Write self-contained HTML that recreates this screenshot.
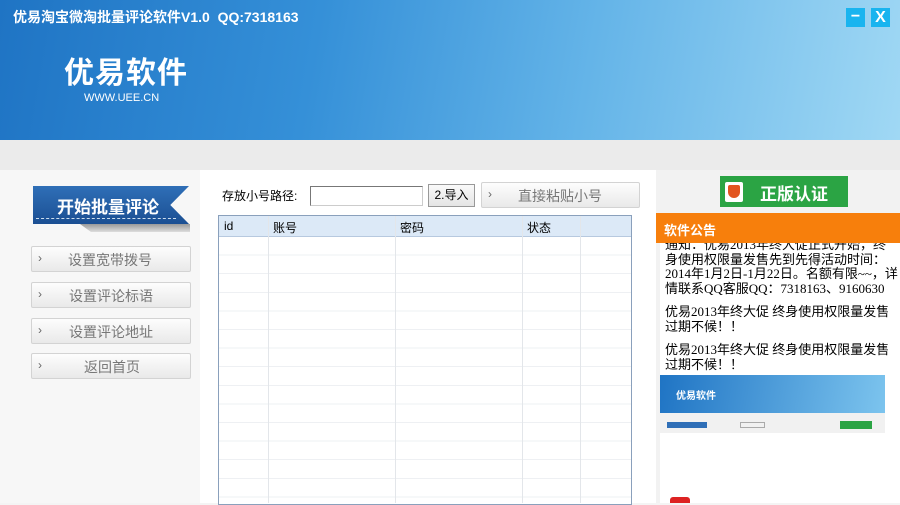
<!DOCTYPE html><html><head><meta charset="utf-8"><style>
*{margin:0;padding:0;box-sizing:border-box}
body{width:900px;height:503px;overflow:hidden;background:#f4f4f4;font-family:"Liberation Sans","Noto Sans CJK SC",sans-serif;position:relative}
.a{position:absolute}
.hdr{left:0;top:0;width:900px;height:140px;background:linear-gradient(100deg,#1f74c4 0%,#3590d8 35%,#64b4e8 65%,#a0d8f4 100%)}
.btn{background:linear-gradient(#fdfdfd,#e9e9e9);border:1px solid #d3d3d3;border-radius:2px;color:#777;font-size:14px}
.btn .ch{position:absolute;left:6px;top:4px;font-size:12px;color:#666}
.t{position:absolute;font-size:13px;color:#000}
.ann{font-size:13px;line-height:14.5px;color:#000;font-family:'Liberation Serif','Noto Sans CJK SC',serif;white-space:nowrap}
</style></head><body>
<div class="a hdr"></div>
<div class="a" style="left:13px;top:7px;color:#fff;font-weight:bold;font-size:14px">优易淘宝微淘批量评论软件V1.0&nbsp; QQ:7318163</div>
<div class="a" style="left:64px;top:48px;color:#fff;font-weight:bold;font-size:30px;letter-spacing:1px">优易软件</div>
<div class="a" style="left:84px;top:92px;color:#fff;font-size:11px">WWW.UEE.CN</div>
<div class="a" style="left:846px;top:8px;width:19px;height:19px;background:#19b4ef;color:#fff;font-weight:bold;text-align:center;line-height:18px;font-size:16px">−</div>
<div class="a" style="left:871px;top:8px;width:19px;height:19px;background:#19b4ef;color:#fff;font-weight:bold;text-align:center;line-height:19px;font-size:16px">X</div>
<div class="a" style="left:0;top:140px;width:900px;height:30px;background:#ebebeb"></div>
<div class="a" style="left:0;top:170px;width:200px;height:333px;background:#f7f7f7"></div>
<div class="a" style="left:200px;top:170px;width:456px;height:333px;background:#fff"></div>
<div class="a" style="left:33px;top:186px;width:156px;height:38px;background:linear-gradient(#2f6fb7,#1b4f93);clip-path:polygon(0 0,100% 0,88% 50%,100% 100%,0 100%)"></div>
<div class="a" style="left:57px;top:193px;color:#fff;font-weight:bold;font-size:17px">开始批量评论</div>
<div class="a" style="left:36px;top:218px;width:140px;border-top:1px dashed #cde"></div>
<div class="a" style="left:80px;top:224px;width:110px;height:8px;background:linear-gradient(#999,#ddd);clip-path:polygon(0 0,100% 0,100% 100%,10% 100%)"></div>
<div class="a btn" style="left:31px;top:246px;width:160px;height:26px"><span class="ch">›</span><span class="a" style="left:36px;top:3px">设置宽带拨号</span></div>
<div class="a btn" style="left:31px;top:282px;width:160px;height:26px"><span class="ch">›</span><span class="a" style="left:37px;top:3px">设置评论标语</span></div>
<div class="a btn" style="left:31px;top:318px;width:160px;height:26px"><span class="ch">›</span><span class="a" style="left:37px;top:3px">设置评论地址</span></div>
<div class="a btn" style="left:31px;top:353px;width:160px;height:26px"><span class="ch">›</span><span class="a" style="left:52px;top:3px">返回首页</span></div>
<div class="t" style="left:222px;top:187px;font-size:12px">存放小号路径:</div>
<div class="a" style="left:310px;top:186px;width:113px;height:20px;background:#fff;border:1px solid #888;border-color:#777 #ccc #ccc #777"></div>
<div class="a" style="left:428px;top:184px;width:47px;height:23px;background:linear-gradient(#fafafa,#e5e5e5);border:1px solid #999;font-size:12px;text-align:center;line-height:21px">2.导入</div>
<div class="a btn" style="left:481px;top:182px;width:159px;height:26px"><span class="ch">›</span><span class="a" style="left:36px;top:3px">直接粘贴小号</span></div>
<div class="a" style="left:218px;top:215px;width:414px;height:290px;border:1px solid #8aa0bc;background:#fff;
background-image:repeating-linear-gradient(to bottom,transparent 0,transparent 17.6px,#eef0f3 17.6px,#eef0f3 18.6px);background-position:0 21px"></div>
<div class="a" style="left:219px;top:216px;width:412px;height:21px;background:#dce9f7;border-bottom:1px solid #b7c9df"></div>
<div class="a" style="left:268px;top:216px;height:287px;border-left:1px solid #e3e6ea"></div>
<div class="a" style="left:395px;top:216px;height:287px;border-left:1px solid #e3e6ea"></div>
<div class="a" style="left:522px;top:216px;height:287px;border-left:1px solid #e3e6ea"></div>
<div class="a" style="left:580px;top:216px;height:287px;border-left:1px solid #e3e6ea"></div>
<div class="t" style="left:224px;top:219px;font-size:12px">id</div>
<div class="t" style="left:273px;top:219px;font-size:12px">账号</div>
<div class="t" style="left:400px;top:219px;font-size:12px">密码</div>
<div class="t" style="left:527px;top:219px;font-size:12px">状态</div>
<div class="a" style="left:656px;top:170px;width:244px;height:333px;background:#f2f2f2"></div>
<div class="a" style="left:660px;top:243px;width:240px;height:260px;background:#fff"></div>
<div class="a" style="left:665px;top:238px;width:234px;overflow:hidden;height:136px">
<div class="ann">通知：优易2013年终大促正式开始，终<br>身使用权限量发售先到先得活动时间：<br>2014年1月2日-1月22日。名额有限~~，详<br>情联系QQ客服QQ：7318163、9160630<div style="height:9px"></div>优易2013年终大促 终身使用权限量发售<br>过期不候！！<div style="height:9px"></div>优易2013年终大促 终身使用权限量发售<br>过期不候！！</div></div>
<div class="a" style="left:720px;top:176px;width:128px;height:31px;background:#2ba444"></div>
<div class="a" style="left:725px;top:182px;width:18px;height:20px;background:#fff;border-radius:2px"><div style="margin:3px;width:12px;height:13px;background:#e25520;border-radius:2px 2px 6px 6px"></div></div>
<div class="a" style="left:760px;top:180px;color:#fff;font-weight:bold;font-size:17px">正版认证</div>
<div class="a" style="left:656px;top:213px;width:244px;height:30px;background:#f77f0c"></div>
<div class="a" style="left:664px;top:220px;color:#fff;font-weight:bold;font-size:13px">软件公告</div>
<div class="a" style="left:660px;top:375px;width:225px;height:38px;background:linear-gradient(100deg,#1f74c4,#7cc4ee)"></div>
<div class="a" style="left:676px;top:387px;color:#fff;font-size:10px;font-weight:bold">优易软件</div>
<div class="a" style="left:660px;top:413px;width:225px;height:20px;background:#f1f1f1"></div>
<div class="a" style="left:667px;top:422px;width:40px;height:6px;background:#2f6fb7"></div>
<div class="a" style="left:740px;top:422px;width:25px;height:6px;border:1px solid #aaa"></div>
<div class="a" style="left:840px;top:421px;width:32px;height:8px;background:#2ba444"></div>
<div class="a" style="left:670px;top:497px;width:20px;height:6px;background:#d22;border-radius:3px 3px 0 0"></div>
</body></html>
